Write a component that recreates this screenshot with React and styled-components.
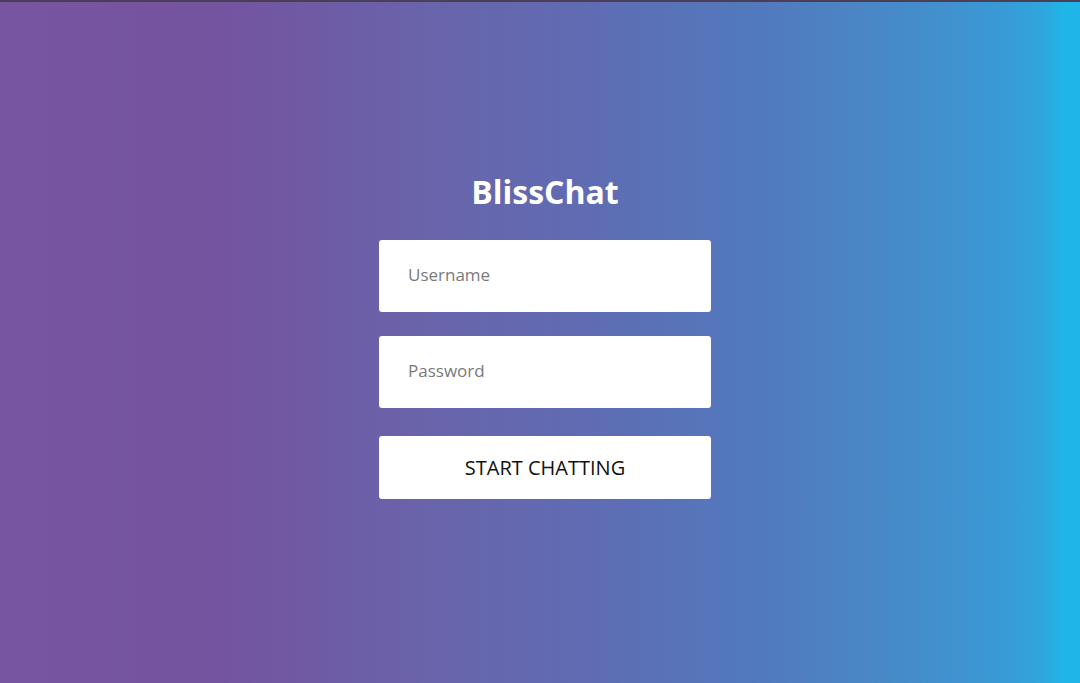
import React from 'react';
import styled, { createGlobalStyle } from 'styled-components';

const GlobalStyle = createGlobalStyle`
  html, body {
    margin: 0;
    padding: 0;
    height: 100%;
  }
  body {
    font-family: "Open Sans", "Noto Sans", sans-serif;
  }
  #root {
    height: 100%;
  }
`;

const Page = styled.div`
  height: 683px;
  box-sizing: border-box;
  border-top: 2px solid #4b3f58;
  padding-left: 10px;
  background: linear-gradient(
    to right,
    #7855a0 0%,
    #74539f 20%,
    #6964ab 40%,
    #5f6cb3 55%,
    #5279bd 70%,
    #4a86c5 80%,
    #3b98d4 92%,
    #30a5de 96.5%,
    #1fb5e8 98.5%,
    #1fb5e8 100%
  );
  display: flex;
  justify-content: center;
`;

const Form = styled.form`
  width: 332px;
  margin-top: 168px;
  display: flex;
  flex-direction: column;
`;

const Title = styled.h1`
  margin: 0 0 27px;
  text-align: center;
  color: #fff;
  font-size: 32px;
  font-weight: 700;
  line-height: 43px;
`;

const Field = styled.input`
  box-sizing: border-box;
  width: 100%;
  height: 72px;
  border: none;
  border-radius: 3px;
  padding: 0 29px 4px;
  margin-bottom: ${p => p.$gap}px;
  font-family: inherit;
  font-size: 17px;
  color: #333;
  outline: none;
  background: #fff;

  &::placeholder {
    color: #7a7a7a;
  }
`;

const Button = styled.button`
  height: 63px;
  width: 100%;
  border: none;
  border-radius: 3px;
  background: #fff;
  color: #111;
  font-family: inherit;
  font-size: 20px;
  cursor: pointer;
`;

export default function App() {
  return (
    <>
      <GlobalStyle />
      <Page>
        <Form onSubmit={e => e.preventDefault()}>
          <Title>BlissChat</Title>
          <Field type="text" placeholder="Username" $gap={24} />
          <Field type="password" placeholder="Password" $gap={28} />
          <Button type="submit">START CHATTING</Button>
        </Form>
      </Page>
    </>
  );
}
